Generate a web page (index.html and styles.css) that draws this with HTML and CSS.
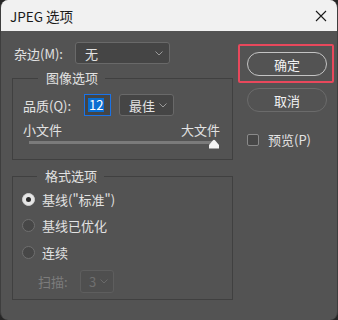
FILE: index.html
```html
<!DOCTYPE html>
<html lang="zh-CN">
<head>
<meta charset="utf-8">
<title>JPEG 选项</title>
<link rel="stylesheet" href="styles.css">
</head>
<body>
<div class="dialog">
  <div class="titlebar">
    <span class="title">JPEG 选项</span>
    <svg class="close" width="12" height="12" viewBox="0 0 12 12"><path d="M1 1 L11 11 M11 1 L1 11" stroke="#1a1a1a" stroke-width="1.1" fill="none"/></svg>
  </div>
  <div class="content">
    <div class="left">
      <div class="row matte">
        <span class="label">杂边(M):</span>
        <div class="select sel-matte"><span>无</span><svg class="chev" width="8" height="5" viewBox="0 0 8 5"><path d="M0.5 0.5 L4 4 L7.5 0.5" stroke="#9a9a9a" stroke-width="1" fill="none"/></svg></div>
      </div>
      <fieldset class="group g-image">
        <legend>图像选项</legend>
        <div class="row quality">
          <span class="label">品质(Q):</span>
          <div class="num"><span class="hl">12</span></div>
          <div class="select sel-q"><span>最佳</span><svg class="chev" width="8" height="5" viewBox="0 0 8 5"><path d="M0.5 0.5 L4 4 L7.5 0.5" stroke="#9a9a9a" stroke-width="1" fill="none"/></svg></div>
        </div>
        <div class="sizes"><span>小文件</span><span>大文件</span></div>
        <div class="slider">
          <svg class="thumb" width="12" height="10" viewBox="0 0 12 10"><path d="M1 9.5 L1 6 L5 1.2 Q6 0.2 7 1.2 L11 6 L11 9.5 Z" fill="#f4f4f4"/></svg>
        </div>
      </fieldset>
      <fieldset class="group g-format">
        <legend>格式选项</legend>
        <div class="radio-row"><span class="radio on"></span><span>基线("标准")</span></div>
        <div class="radio-row"><span class="radio"></span><span>基线已优化</span></div>
        <div class="radio-row"><span class="radio"></span><span>连续</span></div>
        <div class="row scan">
          <span class="label dim">扫描:</span>
          <div class="select sel-scan"><span>3</span><svg class="chev" width="8" height="5" viewBox="0 0 8 5"><path d="M0.5 0.5 L4 4 L7.5 0.5" stroke="#6a6a6a" stroke-width="1" fill="none"/></svg></div>
        </div>
      </fieldset>
    </div>
    <div class="right">
      <div class="focus-box"><div class="btn primary">确定</div></div>
      <div class="btn secondary">取消</div>
      <div class="check-row"><span class="checkbox"></span><span>预览(P)</span></div>
    </div>
  </div>
</div>
</body>
</html>
```
FILE: styles.css
```css
* { box-sizing: border-box; }
html, body { margin: 0; padding: 0; }
body {
  background: #262626;
  width: 338px;
  height: 320px;
  overflow: hidden;
  font-family: "Noto Sans CJK SC", "Noto Sans", sans-serif;
  font-size: 13px;
  color: #e2e2e2;
}
.dialog {
  width: 338px;
  height: 320px;
  border-radius: 8px;
  overflow: hidden;
  background: #535353;
  border-left: 1px solid #3e3e3e;
  border-right: 1px solid #3e3e3e;
  display: flex;
  flex-direction: column;
}
.titlebar {
  height: 31px;
  flex: none;
  background: #f1f1f1;
  display: flex;
  align-items: center;
  justify-content: space-between;
  padding: 0 10px 0 9px;
}
.title {
  font-family: "Noto Sans CJK SC", sans-serif;
  font-size: 13.5px;
  color: #1a1a1a;
  line-height: 18px;
}
.close { display: block; }
.content {
  flex: 1;
  display: flex;
  padding: 11px 0 0 11px;
  gap: 5px;
}
.left { width: 221px; flex: none; }
.row { display: flex; align-items: center; }
.label { line-height: 17px; white-space: nowrap; }
.dim { color: #7c7c7c; }
.matte { height: 22px; }
.matte .label { margin-left: 2px; width: 61px; }
.select {
  height: 22px;
  background: #454545;
  border: 1px solid #696969;
  border-radius: 3px;
  display: flex;
  align-items: center;
  justify-content: space-between;
  line-height: 17px;
}
.chev { display: block; }
.sel-matte { width: 95px; padding: 0 6px 0 9px; }
.group {
  margin: 0;
  border: 1px solid #404040;
  width: 221px;
}
.group legend {
  padding: 0 7px 0 8px;
  margin-left: 15px;
  line-height: 18px;
}
.g-image { margin-top: 5px; padding: 7px 12px 15px 10px; }
.quality { height: 22px; }
.quality .label { width: 61px; }
.num {
  width: 27px;
  height: 22px;
  border: 1.5px solid #1a73e8;
  display: flex;
  align-items: center;
  padding-left: 3px;
  background: #454545;
}
.hl {
  background: #0a6ed1;
  color: #ffffff;
  line-height: 14px;
  padding: 0 1px;
}
.sel-q { width: 55px; margin-left: 8px; padding: 0 6px 0 9px; }
.sizes {
  display: flex;
  justify-content: space-between;
  margin-top: 5px;
  line-height: 17px;
}
.slider {
  position: relative;
  height: 3px;
  background: #7b7b7b;
  margin: 3px 6px 0 6px;
}
.thumb {
  position: absolute;
  right: -6px;
  top: -2px;
  display: block;
}
.g-format { margin-top: 7px; padding: 1px 10px 6px 9px; }
.radio-row {
  display: flex;
  align-items: center;
  height: 26.5px;
  line-height: 17px;
}
.radio {
  width: 13px;
  height: 13px;
  border-radius: 50%;
  border: 1px solid #6f6f6f;
  background: #474747;
  margin-right: 7px;
  flex: none;
  display: flex;
  align-items: center;
  justify-content: center;
}
.radio.on { background: #e6e6e6; border-color: #d0d0d0; }
.radio.on::after {
  content: "";
  width: 5px;
  height: 5px;
  border-radius: 50%;
  background: #2b2b2b;
}
.scan { margin-top: 4px; height: 23px; }
.scan .label { margin-left: 16px; width: 42px; }
.sel-scan {
  width: 34px;
  height: 23px;
  background: #4f4f4f;
  border-color: #5e5e5e;
  color: #6f6f6f;
  padding: 0 5px 0 8px;
}
.right { width: 96px; flex: none; margin-top: 2px; }
.focus-box {
  border: 2px solid #e8485c;
  border-radius: 2px;
  height: 39px;
  padding: 6px 4px 5px 7px;
}
.btn {
  height: 24px;
  width: 80px;
  border-radius: 12px;
  display: flex;
  align-items: center;
  justify-content: center;
  line-height: 17px;
  color: #f2f2f2;
}
.primary { border: 1.5px solid #c4c4c4; }
.secondary { border: 1px solid #6b6b6b; margin: 5px 0 0 9px; }
.check-row {
  display: flex;
  align-items: center;
  margin: 19px 0 0 9px;
  line-height: 17px;
}
.checkbox {
  width: 12px;
  height: 12px;
  border: 1px solid #8a8a8a;
  background: #474747;
  border-radius: 2px;
  margin-right: 9px;
}
```
